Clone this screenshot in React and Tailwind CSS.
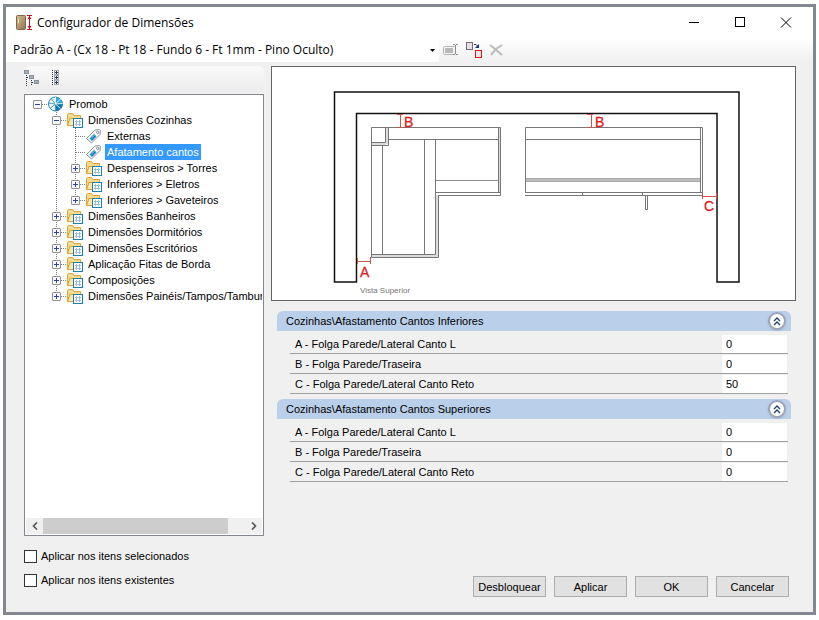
import React, { useState } from "react";

const treeItems = [
  { label: "Promob", level: 0, icon: "root", open: true },
  { label: "Dimensões Cozinhas", level: 1, icon: "folder", open: true },
  { label: "Externas", level: 2, icon: "tag" },
  { label: "Afatamento cantos", level: 2, icon: "tag" },
  { label: "Despenseiros > Torres", level: 2, icon: "folder", open: false },
  { label: "Inferiores > Eletros", level: 2, icon: "folder", open: false },
  { label: "Inferiores > Gaveteiros", level: 2, icon: "folder", open: false, last: true },
  { label: "Dimensões Banheiros", level: 1, icon: "folder", open: false },
  { label: "Dimensões Dormitórios", level: 1, icon: "folder", open: false },
  { label: "Dimensões Escritórios", level: 1, icon: "folder", open: false },
  { label: "Aplicação Fitas de Borda", level: 1, icon: "folder", open: false },
  { label: "Composições", level: 1, icon: "folder", open: false },
  { label: "Dimensões Painéis/Tampos/Tambura", level: 1, icon: "folder", open: false, last: true },
];

const grupos = [
  {
    titulo: "Cozinhas\\Afastamento Cantos Inferiores",
    campos: [
      { id: "inf-a", label: "A - Folga Parede/Lateral Canto L", valor: "0" },
      { id: "inf-b", label: "B - Folga Parede/Traseira", valor: "0" },
      { id: "inf-c", label: "C - Folga Parede/Lateral Canto Reto", valor: "50" },
    ],
  },
  {
    titulo: "Cozinhas\\Afastamento Cantos Superiores",
    campos: [
      { id: "sup-a", label: "A - Folga Parede/Lateral Canto L", valor: "0" },
      { id: "sup-b", label: "B - Folga Parede/Traseira", valor: "0" },
      { id: "sup-c", label: "C - Folga Parede/Lateral Canto Reto", valor: "0" },
    ],
  },
];

function AppIcon() {
  return (
    <svg width="18" height="18" viewBox="0 0 18 18" aria-hidden="true">
      <defs>
        <linearGradient id="porta" x1="0" y1="0" x2="1" y2="1">
          <stop offset="0" stopColor="#d9bd94" />
          <stop offset="1" stopColor="#8f7350" />
        </linearGradient>
      </defs>
      <rect x="0.5" y="1.5" width="9" height="14" rx="1" fill="url(#porta)" stroke="#7d6748" />
      <path d="M2.5 5v4" stroke="#f4e6c8" />
      <path d="M11 1.5h5M11 15.5h5M13.5 2v13" stroke="#c4101c" />
      <path d="M11.5 5L13.5 2l2 3zM11.5 12l2 3 2-3z" fill="#c4101c" />
    </svg>
  );
}

// Linhas pontilhadas e caixa +/- da árvore
function Guide({ item, depth }) {
  const own = depth === item.level;
  const vertical = own ? item.level > 0 : depth === 1 && item.level === 2;
  return (
    <svg width="19" height="16" viewBox="0 0 19 16" className="shrink-0" aria-hidden="true">
      {vertical && (
        <path d={own && item.last ? "M9.5 0V8" : "M9.5 0V16"} stroke="#808080" strokeDasharray="1 1" />
      )}
      {own && <path d="M10 8.5H19" stroke="#808080" strokeDasharray="1 1" />}
      {own && item.open !== undefined && (
        <>
          <rect x="5.5" y="4.5" width="8" height="8" rx="0.5" fill="#f8f8f8" stroke="#919191" />
          <path d={item.open ? "M7 8.5h5" : "M7 8.5h5M9.5 6v5"} stroke="#2b4a9c" />
        </>
      )}
    </svg>
  );
}

function TreeIcon({ type }) {
  if (type === "root") {
    return (
      <svg width="20" height="16" viewBox="0 0 20 16" className="shrink-0" aria-hidden="true">
        <circle cx="8.5" cy="8" r="7" fill="#e2f3fb" stroke="#2a86b4" />
        <path d="M8.5 8V1a7 7 0 0 1 7 7z" fill="#35a8dc" />
        <path d="M8.5 8h7a7 7 0 0 1-7 7z" fill="#0f78b0" />
        <path d="M8.5 8L1.5 7M8.5 8L3 12.500M8.5 8L4 2.500M8.5 8v7" stroke="#3d88ac" strokeWidth="0.8" />
        <path d="M8.5 8V1M8.5 8l5-5M8.5 8l7-0.5M8.5 8l5 4.500" stroke="#fff" strokeWidth="0.8" />
      </svg>
    );
  }
  if (type === "tag") {
    return (
      <svg width="20" height="16" viewBox="0 0 20 16" className="shrink-0" aria-hidden="true">
        <path d="M1.500 10.500L10 2l4.500-.5 1 1-.5 4L6.500 15z" fill="#f5f7f8" stroke="#8b9399" />
        <path d="M4.500 10.500L9 6l2.500 2.500L7 13z" fill="#1787c4" />
        <path d="M6 10.500L9 7.500" stroke="#7fc8ee" />
        <circle cx="12.700" cy="4.300" r="1.200" fill="#fff" stroke="#6c757c" strokeWidth="0.8" />
      </svg>
    );
  }
  return (
    <svg width="20" height="16" viewBox="0 0 20 16" className="shrink-0" aria-hidden="true">
      <path d="M1.500 13.500v-11l1-1h4l1.500 2h6.500v10z" fill="#f6d98a" stroke="#dba03e" />
      <path d="M1.500 13.500L4 6.500h11v7z" fill="#fbe7a9" stroke="#dba03e" />
      <rect x="7.500" y="6.500" width="9" height="9" fill="#fff" stroke="#1b7fb4" />
      <path d="M9 9.500h6M9 12.500h6M10.500 8v6M13.500 8v6" stroke="#9dbdd2" />
    </svg>
  );
}

function CollapseIcon() {
  return (
    <svg width="15" height="17" viewBox="0 0 15 17" aria-hidden="true">
      <g fill="none" stroke="#8a8f98">
        <rect x="0.500" y="1.500" width="4" height="3" />
        <rect x="5.500" y="6.500" width="4" height="3" />
        <rect x="10.500" y="11.500" width="4" height="3" />
      </g>
      <path d="M2.500 6v11M7.500 11v6M3 8.500h2M8 13.500h2" stroke="#303030" strokeDasharray="1 1" />
      <path d="M1 3h3M6 8h3M11 13h3" stroke="#4a689c" />
    </svg>
  );
}

function ExpandIcon() {
  return (
    <svg width="9" height="17" viewBox="0 0 9 17" aria-hidden="true">
      <path d="M1.500 1v15" stroke="#303030" strokeDasharray="1 1" />
      <g fill="none" stroke="#a3a7ae">
        <rect x="3.500" y="1.500" width="4" height="4" />
        <rect x="3.500" y="6.500" width="4" height="4" />
        <rect x="3.500" y="11.500" width="4" height="4" />
      </g>
      <path d="M4 3.500h3M5.500 2v3M4 8.500h3M5.500 7v3M4 13.500h3M5.500 12v3" stroke="#26365c" />
    </svg>
  );
}

function VistaSuperior() {
  return (
    <svg viewBox="0 0 523 233" className="block h-auto w-full" role="img" aria-label="Vista Superior">
      {/* Paredes */}
      <path
        d="M62.500 25H467V215H445V46.500H84.500V215H62.500z"
        fill="#fff"
        stroke="#111"
        strokeWidth="1.500"
      />

      {/* Armário de canto */}
      <path d="M100 189H166M165 128V190M114 77H100M115 61v16M227.500 61v64" stroke="#dcdcdc" strokeWidth="2" />
      <g fill="none" stroke="#777">
        <path d="M99.500 60.500H228.500V128.500H166.500V190.500H99.500z" />
        <path d="M116.500 60.500V78.500H99.500M113.500 60.500V75.500H99.500" />
        <path d="M116.500 72.500H226.500M226.500 60.500V125.500M228.500 125.500H163.500" />
        <path d="M110.500 78.500V187.500M152.500 72.500V187.500M163.500 72.500V187.500" />
        <path d="M163.500 113.500H226.500" stroke="#8a8a8a" />
        <path d="M99.500 187.500H163.500" />
      </g>

      {/* Armário reto */}
      <rect x="253" y="111" width="175" height="4" fill="#bdbdbd" />
      <path d="M253 111.500H428M253 114.500H428" stroke="#a8a8a8" />
      <g fill="none" stroke="#777">
        <path d="M253.500 125.500V60.500H430.500V128.500H253" />
        <path d="M253.500 72.500H428.500M428.500 60.500V125.500M253 125.500H430.500" />
        <path d="M310.500 126V128M370.500 126V128" />
        <path d="M373.500 129V142.500H375.500V129" />
      </g>

      {/* Cotas */}
      <g fill="none" stroke="#d0524f">
        <path d="M128.500 47V60.500M125 47.500H131M125 60.500H131" />
        <path d="M319.500 47V60.500M315 47.500H321M315 60.500H321" />
        <path d="M85 194.500H98.500M85.500 191V197M98.500 190V197" />
        <path d="M430.500 129.500H444.500M430.500 126V132M444.500 126V132" />
      </g>
      <g
        fill="#e0201c"
        stroke="#e0201c"
        strokeWidth="0.3"
        fontSize="14"
        fontFamily="Liberation Sans, Arial, sans-serif"
      >
        <text x="132" y="60">B</text>
        <text x="323" y="60">B</text>
        <text x="88" y="210">A</text>
        <text x="432" y="144">C</text>
      </g>
      <text x="88" y="226" fontSize="8" fill="#777" fontFamily="Liberation Sans, Arial, sans-serif">
        Vista Superior
      </text>
    </svg>
  );
}

function Grupo({ grupo, valores, onChange }) {
  const [aberto, setAberto] = useState(true);

  return (
    <section>
      <div className="flex h-5 items-center justify-between rounded-t-md bg-[#bad0ea] pr-[5px] pl-[9px]">
        <h2>{grupo.titulo}</h2>
        <button
          type="button"
          aria-label="Recolher grupo"
          aria-expanded={aberto}
          onClick={() => setAberto(!aberto)}
          className="flex size-[18px] items-center justify-center rounded-full border-2 border-[#9da6b8] bg-white shadow-sm"
        >
          <svg width="8" height="9" viewBox="0 0 8 9" className={aberto ? "" : "rotate-180"} aria-hidden="true">
            <path d="M1 4l3-3 3 3M1 8l3-3 3 3" fill="none" stroke="#27406e" strokeWidth="1.400" />
          </svg>
        </button>
      </div>
      {aberto && (
        <div className="mr-[3px] ml-[13px] pt-[3px]">
          {grupo.campos.map((campo) => (
            <div key={campo.id} className="flex h-5 items-center border-b border-[#a0a0a0]">
              <label htmlFor={campo.id} className="flex-1 pl-[5px]">
                {campo.label}
              </label>
              <input
                id={campo.id}
                type="text"
                value={valores[campo.id]}
                onChange={(e) => onChange(campo.id, e.target.value)}
                className="mr-px h-[18px] w-[65px] bg-white px-1 outline-none"
              />
            </div>
          ))}
        </div>
      )}
    </section>
  );
}

export default function App() {
  const [selecionado, setSelecionado] = useState("Afatamento cantos");
  const [valores, setValores] = useState(
    Object.fromEntries(grupos.flatMap((g) => g.campos.map((c) => [c.id, c.valor])))
  );

  const handleChange = (id, valor) => {
    setValores({ ...valores, [id]: valor });
  };

  return (
    <div className="flex min-h-screen bg-white px-[3px] pt-1 pb-[5px] font-['Liberation_Sans',Arial,sans-serif] text-[11px] leading-4 text-black">
      <div className="flex min-w-0 flex-1 flex-col border-3 border-[#838790] bg-[#f0f0f0]">
        {/* Barra de título */}
        <header className="flex h-[31px] items-center bg-white pr-[21px] pl-[10px] font-['Open_Sans','Noto_Sans',sans-serif]">
          <AppIcon />
          <h1 className="ml-[3px] flex-1 text-xs">Configurador de Dimensões</h1>
          <div className="flex items-center gap-[34px]">
            <button type="button" aria-label="Minimizar">
              <svg width="12" height="12" viewBox="0 0 12 12">
                <path d="M1 5.500h10" stroke="#000" />
              </svg>
            </button>
            <button type="button" aria-label="Maximizar">
              <svg width="12" height="12" viewBox="0 0 12 12">
                <rect x="1.500" y="0.500" width="9" height="9" fill="none" stroke="#000" />
              </svg>
            </button>
            <button type="button" aria-label="Fechar">
              <svg width="12" height="12" viewBox="0 0 12 12">
                <path d="M1 0.500l10 10M11 0.500L1 10.500" stroke="#000" />
              </svg>
            </button>
          </div>
        </header>

        {/* Padrão de dimensões */}
        <div className="flex h-6 items-center bg-linear-to-b from-white to-[#f0f0f0]">
          <div className="relative w-[433px]">
            <select
              aria-label="Padrão"
              className="block h-6 w-full appearance-none bg-white pl-[7px] font-['Open_Sans','Noto_Sans',sans-serif] text-xs outline-none"
            >
              <option>Padrão A - (Cx 18 - Pt 18 - Fundo 6 - Ft 1mm - Pino Oculto)</option>
            </select>
            <svg width="5" height="3" viewBox="0 0 5 3" className="pointer-events-none absolute top-[11px] right-1">
              <path d="M0 0h5L2.500 3z" fill="#000" />
            </svg>
          </div>
          <div className="ml-1 flex items-center gap-[7px]">
            <button type="button" aria-label="Renomear" disabled>
              <svg width="16" height="14" viewBox="0 0 16 14">
                <rect x="0.500" y="3.500" width="12" height="8" rx="1" fill="#f4f4f4" stroke="#b4b4b4" />
                <rect x="2" y="5" width="8" height="5" fill="#b9b9b9" />
                <path d="M10 1.500h2M13 1.500h2M10 11.500h2M13 11.500h2M12.500 2v9" stroke="#8d8d8d" />
              </svg>
            </button>
            <button type="button" aria-label="Duplicar">
              <svg width="16" height="16" viewBox="0 0 16 16">
                <rect x="0.500" y="0.500" width="6" height="7" fill="#e6e2ea" stroke="#7a6670" />
                <rect x="9.500" y="8.500" width="6" height="7" fill="#ece6ea" stroke="#e0141c" />
                <path d="M8 2.500h2l2 2" fill="none" stroke="#1a2f8c" />
                <path d="M13 2v4H9z" fill="#1a2f8c" />
              </svg>
            </button>
            <button type="button" aria-label="Excluir" disabled>
              <svg width="15" height="12" viewBox="0 0 15 12">
                <path d="M1 1l5 4 7 6M13 1L7 5l-5 6" fill="none" stroke="#bcbcbc" strokeWidth="2" />
              </svg>
            </button>
          </div>
        </div>

        {/* Conteúdo principal */}
        <main className="flex flex-1 gap-[7px] pt-1 pr-[17px] pl-[18px]">
          <aside className="flex w-60 shrink-0 flex-col gap-[2px]">
            <div className="flex h-[26px] items-center gap-3 rounded-md bg-linear-to-b from-[#fafafa] to-[#ebebeb] pb-1">
              <button type="button" aria-label="Recolher tudo">
                <CollapseIcon />
              </button>
              <button type="button" aria-label="Expandir tudo">
                <ExpandIcon />
              </button>
            </div>

            <div className="flex flex-1 flex-col border border-[#828790] bg-white p-px">
              <ul className="flex-1 overflow-hidden pl-[2px]">
                {treeItems.map((item) => (
                  <li key={item.label} className="flex h-4 items-center whitespace-nowrap">
                    {[0, 1, 2].slice(0, item.level + 1).map((depth) => (
                      <Guide key={depth} item={item} depth={depth} />
                    ))}
                    <TreeIcon type={item.icon} />
                    <button
                      type="button"
                      onClick={() => setSelecionado(item.label)}
                      className={
                        selecionado === item.label
                          ? "h-4 bg-[#3399ff] px-[2px] text-white"
                          : "h-4 px-[2px]"
                      }
                    >
                      {item.label}
                    </button>
                  </li>
                ))}
              </ul>
              {/* Barra de rolagem horizontal */}
              <div className="flex h-4 items-stretch bg-[#f0f0f0]">
                <button type="button" aria-label="Rolar para a esquerda" className="flex w-[17px] items-center justify-center">
                  <svg width="6" height="8" viewBox="0 0 6 8">
                    <path d="M5 0.500L1.500 4 5 7.500" fill="none" stroke="#555" strokeWidth="1.600" />
                  </svg>
                </button>
                <div className="flex flex-1">
                  <div className="w-11/12 bg-[#cdcdcd]" />
                </div>
                <button type="button" aria-label="Rolar para a direita" className="flex w-[17px] items-center justify-center">
                  <svg width="6" height="8" viewBox="0 0 6 8">
                    <path d="M1 0.500L4.500 4 1 7.500" fill="none" stroke="#555" strokeWidth="1.600" />
                  </svg>
                </button>
              </div>
            </div>
          </aside>

          <div className="min-w-0 flex-1">
            <div className="border border-[#646464] bg-white">
              <VistaSuperior />
            </div>
            <div className="flex flex-col gap-[5px] pt-[10px] pr-[5px] pl-[6px]">
              {grupos.map((grupo) => (
                <Grupo key={grupo.titulo} grupo={grupo} valores={valores} onChange={handleChange} />
              ))}
            </div>
          </div>
        </main>

        {/* Rodapé */}
        <footer className="flex justify-between pt-[10px] pr-6 pb-[15px] pl-[18px]">
          <div className="flex flex-col gap-1">
            <label className="flex h-5 items-center gap-1">
              <input type="checkbox" className="size-[13px] appearance-none border border-[#333] bg-white checked:bg-[#333]" />
              Aplicar nos itens selecionados
            </label>
            <label className="flex h-5 items-center gap-1">
              <input type="checkbox" className="size-[13px] appearance-none border border-[#333] bg-white checked:bg-[#333]" />
              Aplicar nos itens existentes
            </label>
          </div>
          <div className="flex gap-2 pt-[30px]">
            <button type="button" className="h-[21px] w-[73px] border border-[#adadad] bg-[#e1e1e1]">
              Desbloquear
            </button>
            <button type="button" className="h-[21px] w-[73px] border border-[#adadad] bg-[#e1e1e1]">
              Aplicar
            </button>
            <button type="button" className="h-[21px] w-[73px] border border-[#adadad] bg-[#e1e1e1]">
              OK
            </button>
            <button type="button" className="h-[21px] w-[73px] border border-[#adadad] bg-[#e1e1e1]">
              Cancelar
            </button>
          </div>
        </footer>
      </div>
    </div>
  );
}
